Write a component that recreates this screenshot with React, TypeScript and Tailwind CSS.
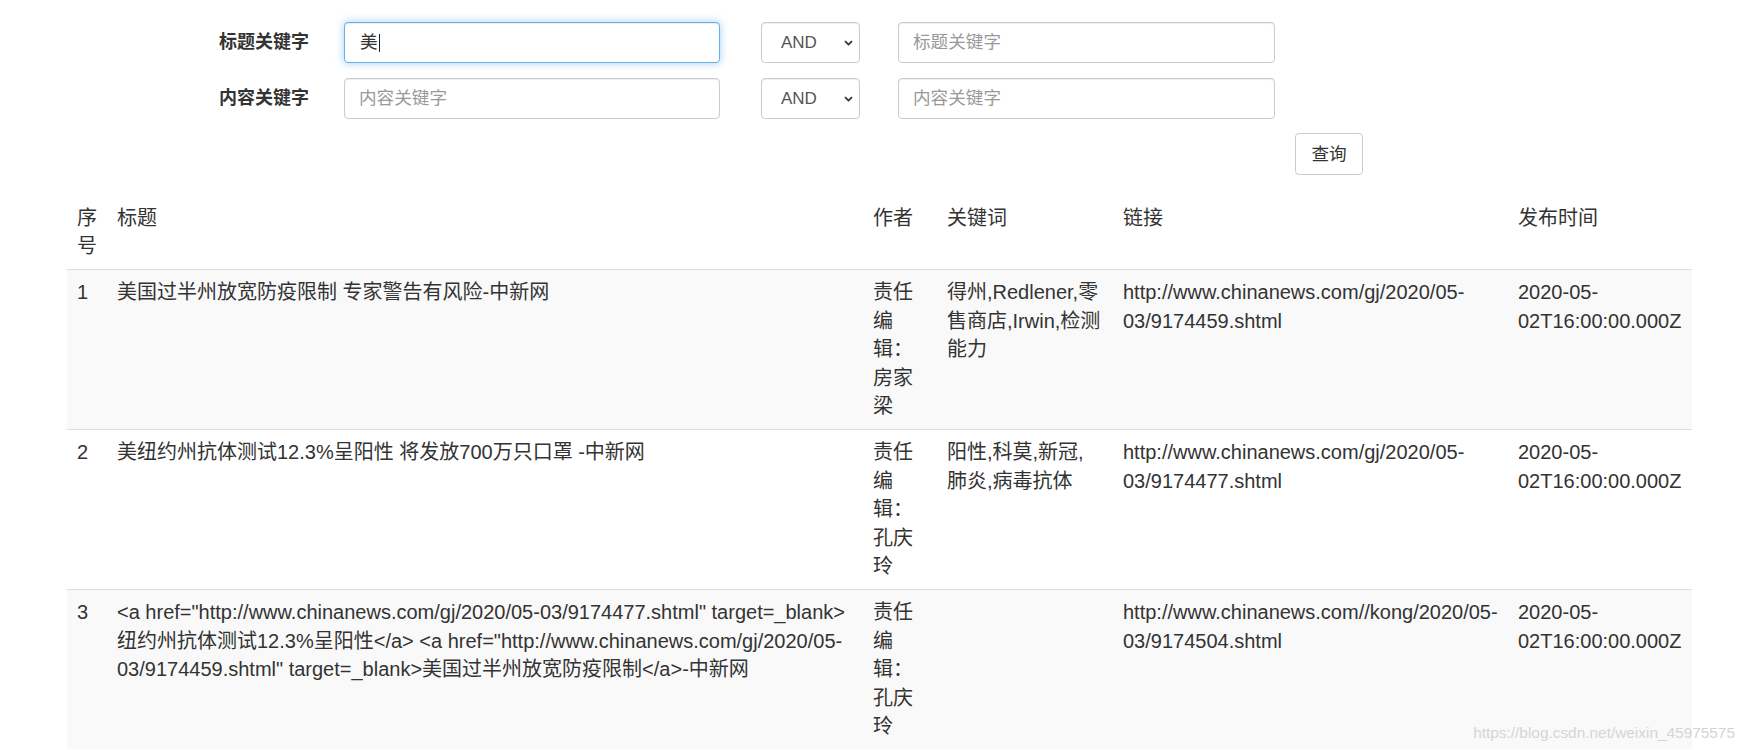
import React from "react";

const inputBase =
  "h-[41px] rounded-[4px] border border-[#ccc] bg-white px-[14px] text-[17.6px] text-[#555] placeholder:text-[#999] shadow-[inset_0_1px_1px_rgba(0,0,0,0.075)] outline-none font-['Liberation_Sans','Noto_Sans_CJK_SC',sans-serif]";

function AndSelect({ className = "" }: { className?: string }) {
  return (
    <div className={"relative h-[41px] w-[99px] " + className}>
      <select
        defaultValue="AND"
        className="h-full w-full appearance-none rounded-[4px] border border-[#ccc] bg-white pl-[19px] pr-[20px] text-[17px] text-[#555] shadow-[inset_0_1px_1px_rgba(0,0,0,0.075)] outline-none font-['Liberation_Sans','Noto_Sans_CJK_SC',sans-serif]"
      >
        <option value="AND">AND</option>
        <option value="OR">OR</option>
        <option value="NOT">NOT</option>
      </select>
      <svg
        className="pointer-events-none absolute left-[83px] top-[18px]"
        width="9"
        height="6"
        viewBox="0 0 9 6"
      >
        <path d="M1 1.2 L4.5 4.6 L8 1.2" fill="none" stroke="#333" strokeWidth="1.8" />
      </svg>
    </div>
  );
}

const headers = ["序号", "标题", "作者", "关键词", "链接", "发布时间"];

type Row = {
  no: string;
  title: React.ReactNode;
  author: string;
  keywords: React.ReactNode;
  link: React.ReactNode;
  time: React.ReactNode;
};

const rows: Row[] = [
  {
    no: "1",
    title: "美国过半州放宽防疫限制 专家警告有风险-中新网",
    author: "责任编辑：房家梁",
    keywords: (
      <>
        得州,Redlener,零
        <br />
        售商店,Irwin,检测
        <br />
        能力
      </>
    ),
    link: (
      <>
        http://www.chinanews.com/gj/2020/05-
        <br />
        03/9174459.shtml
      </>
    ),
    time: (
      <>
        2020-05-
        <br />
        02T16:00:00.000Z
      </>
    ),
  },
  {
    no: "2",
    title: "美纽约州抗体测试12.3%呈阳性 将发放700万只口罩 -中新网",
    author: "责任编辑：孔庆玲",
    keywords: (
      <>
        阳性,科莫,新冠,
        <br />
        肺炎,病毒抗体
      </>
    ),
    link: (
      <>
        http://www.chinanews.com/gj/2020/05-
        <br />
        03/9174477.shtml
      </>
    ),
    time: (
      <>
        2020-05-
        <br />
        02T16:00:00.000Z
      </>
    ),
  },
  {
    no: "3",
    title: (
      <>
        {'<a href="http://www.chinanews.com/gj/2020/05-03/9174477.shtml" target=_blank>'}
        <br />
        {'纽约州抗体测试12.3%呈阳性</a> <a href="http://www.chinanews.com/gj/2020/05-'}
        <br />
        {'03/9174459.shtml" target=_blank>美国过半州放宽防疫限制</a>-中新网'}
      </>
    ),
    author: "责任编辑：孔庆玲",
    keywords: "",
    link: (
      <>
        http://www.chinanews.com//kong/2020/05-
        <br />
        03/9174504.shtml
      </>
    ),
    time: (
      <>
        2020-05-
        <br />
        02T16:00:00.000Z
      </>
    ),
  },
];

const cell = "px-[10px] py-[8.5px] text-left align-top";

export default function App() {
  return (
    <div className="relative h-[750px] w-full overflow-hidden bg-white text-[#333] font-['Liberation_Sans','Noto_Sans_CJK_SC',sans-serif]">
      <form className="flex flex-col pt-[22px]" onSubmit={(e) => e.preventDefault()}>
        <div className="flex h-[41px] items-center">
          <label className="ml-[219px] w-[125px] text-[18px] font-bold text-[#333]">标题关键字</label>
          <div className="flex h-[41px] w-[376px] items-center rounded-[4px] border border-[#66afe9] bg-white pl-[15px] pr-[14px] text-[17.6px] text-[#333] shadow-[inset_0_1px_1px_rgba(0,0,0,0.075),0_0_8px_rgba(102,175,233,0.6)]">
            <span>美</span>
            <span className="ml-[1px] inline-block h-[18px] w-px bg-[#222]" />
          </div>
          <AndSelect className="ml-[41px]" />
          <input className={inputBase + " ml-[38px] w-[377px]"} placeholder="标题关键字" />
        </div>
        <div className="mt-[15px] flex h-[41px] items-center">
          <label className="ml-[219px] w-[125px] text-[18px] font-bold text-[#333]">内容关键字</label>
          <input className={inputBase + " w-[376px]"} placeholder="内容关键字" />
          <AndSelect className="ml-[41px]" />
          <input className={inputBase + " ml-[38px] w-[377px]"} placeholder="内容关键字" />
        </div>
        <div className="mt-[14px] flex">
          <button
            type="submit"
            className="ml-[1295px] h-[42px] w-[68px] rounded-[4px] border border-[#ccc] bg-white text-[17.6px] text-[#333]"
          >
            查询
          </button>
        </div>
      </form>

      <table className="ml-[67px] mt-[20px] w-[1625px] table-fixed border-collapse text-[20px] leading-[28.4px] text-[#333]">
        <colgroup>
          <col className="w-[40px]" />
          <col className="w-[756px]" />
          <col className="w-[74px]" />
          <col className="w-[176px]" />
          <col className="w-[395px]" />
          <col className="w-[184px]" />
        </colgroup>
        <thead>
          <tr>
            {headers.map((h) => (
              <th key={h} className={cell + " font-normal"}>
                {h}
              </th>
            ))}
          </tr>
        </thead>
        <tbody>
          {rows.map((r, i) => (
            <tr key={r.no} className={i % 2 === 0 ? "bg-[#f9f9f9]" : "bg-white"}>
              <td className={cell + " border-t border-[#ddd]"}>{r.no}</td>
              <td className={cell + " border-t border-[#ddd]"}>{r.title}</td>
              <td className={cell + " border-t border-[#ddd]"}>{r.author}</td>
              <td className={cell + " border-t border-[#ddd]"}>{r.keywords}</td>
              <td className={cell + " border-t border-[#ddd] whitespace-nowrap"}>{r.link}</td>
              <td className={cell + " border-t border-[#ddd] whitespace-nowrap"}>{r.time}</td>
            </tr>
          ))}
        </tbody>
      </table>

      <div className="pointer-events-none absolute right-[22px] top-[721px] text-[15.4px] text-[#d4d4d4] [text-shadow:0_0_1px_#fff]">
        https://blog.csdn.net/weixin_45975575
      </div>
    </div>
  );
}
